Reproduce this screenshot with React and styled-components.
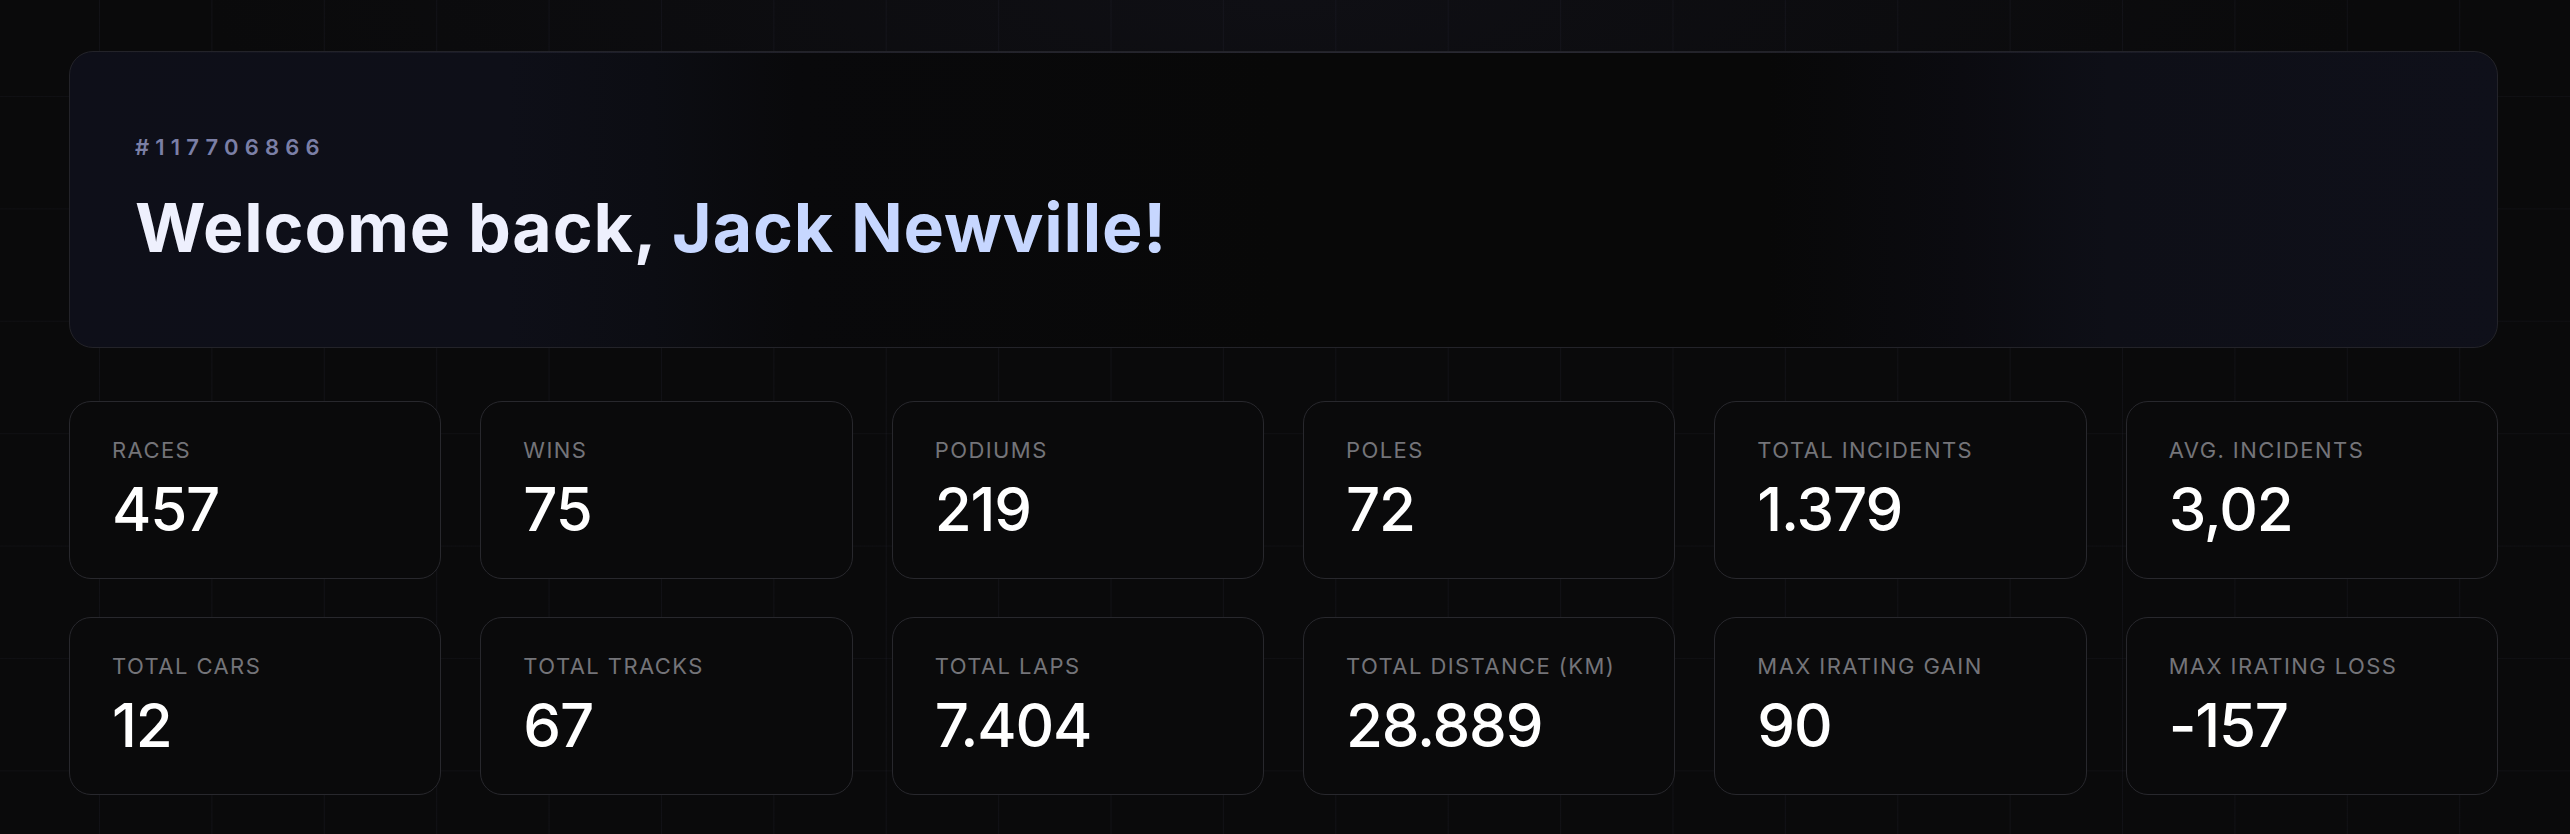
import React from "react";
import styled, { createGlobalStyle } from "styled-components";

const GlobalStyle = createGlobalStyle`
  * { box-sizing: border-box; }
  html, body { margin: 0; padding: 0; }
  body {
    background-color: #0a0a0b;
    font-family: Inter, "Noto Sans", "Liberation Sans", sans-serif;
    color: #fff;
    -webkit-font-smoothing: antialiased;
  }
`;

const Page = styled.main`
  min-height: 834px;
  padding: 51px 72px 40px 69px;
  background-color: #0a0a0b;
  background-image:
    radial-gradient(ellipse 60% 45% at 50% 0%, rgba(30, 30, 48, 0.25), rgba(0, 0, 0, 0) 70%),
    linear-gradient(to right, rgba(120, 120, 170, 0.07) 1px, transparent 1px),
    linear-gradient(to bottom, rgba(120, 120, 170, 0.05) 1px, transparent 1px);
  background-size: 100% 100%, 112.4px 112.4px, 112.4px 112.4px;
  background-position: 0 0, 99px 96px, 99px 96px;
  display: flex;
  flex-direction: column;
  gap: 53px;
`;

const Hero = styled.section`
  position: relative;
  height: 297px;
  border: 1.5px solid #232329;
  border-radius: 24px;
  padding: 82px 66px 0 65px;
  overflow: hidden;
  background:
    linear-gradient(
      90deg,
      #0e0f19 0%,
      #0e0f18 18%,
      #0c0d13 24%,
      #09090b 30%,
      #080808 50%,
      #080808 70%,
      #0b0b10 78%,
      #0e0f17 84%,
      #0f101a 100%
    );
  display: flex;
  flex-direction: column;
  gap: 30px;

  &::before {
    content: "";
    position: absolute;
    top: 0;
    left: 24px;
    right: 24px;
    height: 1px;
    background: linear-gradient(
      90deg,
      rgba(255, 255, 255, 0) 0%,
      rgba(140, 140, 180, 0.18) 30%,
      rgba(140, 140, 180, 0.25) 60%,
      rgba(255, 255, 255, 0) 100%
    );
  }
`;

const PlayerId = styled.div`
  font-size: 22px;
  line-height: 26px;
  font-weight: 600;
  letter-spacing: 0.28em;
  color: #7b7fa6;
`;

const Heading = styled.h1`
  margin: 0;
  font-size: 68px;
  line-height: 75px;
  font-weight: 700;
  letter-spacing: 0.012em;
  color: #eef0fd;
`;

const Name = styled.span`
  color: #c7d7ff;
`;

const StatsGrid = styled.section`
  display: grid;
  grid-template-columns: repeat(6, 1fr);
  column-gap: 39px;
  row-gap: 38px;
`;

const StatCard = styled.div`
  height: 178px;
  border: 1.5px solid #28282d;
  border-radius: 22px;
  background: #0a0a0b;
  padding: 35px 42px 0 42px;
  display: flex;
  flex-direction: column;
  gap: 16px;
`;

const StatLabel = styled.div`
  font-size: 22px;
  line-height: 26px;
  font-weight: 400;
  letter-spacing: 0.065em;
  text-transform: uppercase;
  color: #747479;
  white-space: nowrap;
`;

const StatValue = styled.div`
  font-size: 60px;
  line-height: 60px;
  font-weight: 500;
  letter-spacing: -0.02em;
  color: #ffffff;
`;

const stats = [
  ["Races", "457"],
  ["Wins", "75"],
  ["Podiums", "219"],
  ["Poles", "72"],
  ["Total Incidents", "1.379"],
  ["Avg. Incidents", "3,02"],
  ["Total Cars", "12"],
  ["Total Tracks", "67"],
  ["Total Laps", "7.404"],
  ["Total Distance (km)", "28.889"],
  ["Max iRating Gain", "90"],
  ["Max iRating Loss", "-157"],
];

export default function App() {
  return (
    <>
      <GlobalStyle />
      <Page>
        <Hero>
          <PlayerId>#117706866</PlayerId>
          <Heading>
            Welcome back, <Name>Jack Newville!</Name>
          </Heading>
        </Hero>
        <StatsGrid>
          {stats.map(([label, value]) => (
            <StatCard key={label}>
              <StatLabel>{label}</StatLabel>
              <StatValue>{value}</StatValue>
            </StatCard>
          ))}
        </StatsGrid>
      </Page>
    </>
  );
}
